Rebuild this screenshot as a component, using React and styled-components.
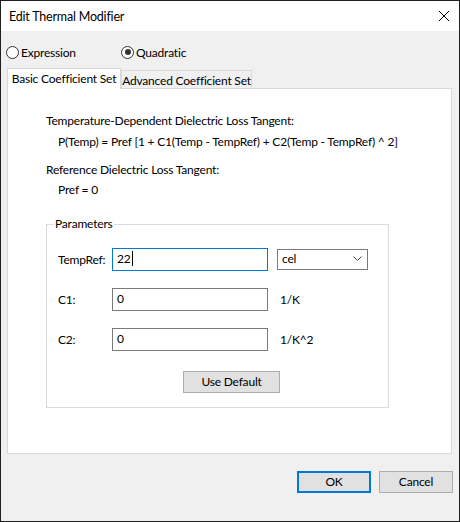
import React from "react";
import styled, { createGlobalStyle } from "styled-components";

const GlobalStyle = createGlobalStyle`
  html, body {
    margin: 0;
    padding: 0;
    background: #ffffff;
  }
  body {
    font-family: "Lato", "Liberation Sans", sans-serif;
    font-size: 12px;
    letter-spacing: -0.2px;
    color: #000;
  }
`;

const Window = styled.div`
  width: 460px;
  height: 522px;
  box-sizing: border-box;
  border: 1px solid #1f1f1f;
  display: flex;
  flex-direction: column;
  background: #f0f0f0;
`;

const TitleBar = styled.div`
  height: 30px;
  background: #fff;
  display: flex;
  align-items: center;
  justify-content: space-between;
  padding: 0 10px 0 8px;
  font-size: 12.5px;
`;

const CloseButton = styled.div`
  width: 10px;
  height: 10px;
  display: flex;
`;

const Body = styled.div`
  flex: 1;
  display: flex;
  flex-direction: column;
  padding: 13px 7px 0 6px;
`;

const RadioRow = styled.div`
  display: flex;
  height: 16px;
  align-items: center;
  margin-left: -1px;
`;

const Radio = styled.label`
  display: flex;
  align-items: center;
  gap: 2px;
  width: ${(p) => p.width}px;
`;

const RadioDot = styled.span`
  width: 13px;
  height: 13px;
  box-sizing: border-box;
  border: 1px solid #333;
  border-radius: 50%;
  background: #fff;
  display: flex;
  align-items: center;
  justify-content: center;
  &::after {
    content: "";
    width: 6px;
    height: 6px;
    border-radius: 50%;
    background: ${(p) => (p.checked ? "#333" : "transparent")};
  }
`;

const TabStrip = styled.div`
  display: flex;
  align-items: flex-end;
  margin-top: 8px;
  margin-bottom: -1px;
  position: relative;
  z-index: 1;
`;

const Tab = styled.div`
  box-sizing: border-box;
  width: ${(p) => p.width}px;
  height: ${(p) => (p.active ? 21 : 18)}px;
  margin-bottom: ${(p) => (p.active ? 0 : 1)}px;
  border: 1px solid #d9d9d9;
  border-bottom: none;
  background: ${(p) => (p.active ? "#fff" : "#f0f0f0")};
  display: flex;
  align-items: center;
  justify-content: center;
  white-space: nowrap;
  padding: ${(p) => (p.active ? "0 0 2px" : "2px 0 0")};
`;

const Panel = styled.div`
  height: 366px;
  box-sizing: border-box;
  border: 1px solid #d9d9d9;
  background: #fff;
  padding: 24px 0 0 38px;
`;

const Heading = styled.div`
  line-height: 16px;
  margin-top: ${(p) => p.gap || 0}px;
`;

const Indented = styled(Heading)`
  padding-left: 12px;
`;

const GroupBox = styled.fieldset`
  width: 343px;
  box-sizing: border-box;
  margin: 18px 0 0 0;
  padding: 0 0 14px 11px;
  border: 1px solid #dcdcdc;
  min-width: 0;
`;

const Legend = styled.legend`
  line-height: 16px;
  padding: 0 1px;
  margin-left: -4px;
`;

const FieldGrid = styled.div`
  display: grid;
  grid-template-columns: 44px 156px auto;
  column-gap: 10px;
  row-gap: 17px;
  align-items: center;
  margin-top: 16px;
`;

const FieldLabel = styled.span``;

const TextField = styled.div`
  box-sizing: border-box;
  height: 23px;
  border: 1px solid ${(p) => (p.focused ? "#0078d7" : "#7a7a7a")};
  background: #fff;
  padding: 0 4px;
  display: flex;
  align-items: center;
  padding-bottom: 2px;
`;

const Caret = styled.span`
  display: inline-block;
  width: 1px;
  height: 15px;
  background: #000;
  margin-left: 1px;
`;

const Combo = styled.div`
  box-sizing: border-box;
  width: 91px;
  height: 21px;
  margin-left: -1px;
  border: 1px solid #7a7a7a;
  background: #fff;
  display: flex;
  align-items: center;
  justify-content: space-between;
  padding: 0 5px 2px 4px;
`;

const Unit = styled.span`
  padding-left: 2px;
`;

const ButtonRow = styled.div`
  display: flex;
  margin-top: 20px;
  padding-left: 125px;
`;

const Button = styled.div`
  box-sizing: border-box;
  width: ${(p) => p.width || 74}px;
  height: 22px;
  background: #e1e1e1;
  border: ${(p) => (p.primary ? "2px solid #0078d7" : "1px solid #adadad")};
  display: flex;
  align-items: center;
  justify-content: center;
  padding-bottom: 1px;
`;

const Footer = styled.div`
  display: flex;
  justify-content: flex-end;
  gap: 8px;
  margin-top: 17px;
  margin-right: -1px;
`;

const Chevron = () => (
  <svg width="9" height="5" viewBox="0 0 9 5">
    <path d="M0.5 0.5 L4.5 4.5 L8.5 0.5" fill="none" stroke="#444" strokeWidth="1" />
  </svg>
);

const CloseIcon = () => (
  <svg width="10" height="10" viewBox="0 0 10 10">
    <path d="M0 0 L10 10 M10 0 L0 10" stroke="#000" strokeWidth="1" />
  </svg>
);

const fields = [
  { label: "C1:", value: "0", unit: "1/K" },
  { label: "C2:", value: "0", unit: "1/K^2" },
];

export default function App() {
  return (
    <>
      <GlobalStyle />
      <Window>
        <TitleBar>
          <span>Edit Thermal Modifier</span>
          <CloseButton>
            <CloseIcon />
          </CloseButton>
        </TitleBar>
        <Body>
          <RadioRow>
            <Radio width={115}>
              <RadioDot />
              Expression
            </Radio>
            <Radio>
              <RadioDot checked />
              Quadratic
            </Radio>
          </RadioRow>
          <TabStrip>
            <Tab active width={114}>Basic Coefficient Set</Tab>
            <Tab width={131}>Advanced Coefficient Set</Tab>
          </TabStrip>
          <Panel>
            <Heading>Temperature-Dependent Dielectric Loss Tangent:</Heading>
            <Indented gap={5}>
              P(Temp) = Pref [1 + C1(Temp - TempRef) + C2(Temp - TempRef) ^ 2]
            </Indented>
            <Heading gap={12}>Reference Dielectric Loss Tangent:</Heading>
            <Indented gap={4}>Pref = 0</Indented>
            <GroupBox>
              <Legend>Parameters</Legend>
              <FieldGrid>
                <FieldLabel>TempRef:</FieldLabel>
                <TextField focused>
                  22
                  <Caret />
                </TextField>
                <Combo>
                  <span>cel</span>
                  <Chevron />
                </Combo>
                {fields.map((f) => (
                  <React.Fragment key={f.label}>
                    <FieldLabel>{f.label}</FieldLabel>
                    <TextField>{f.value}</TextField>
                    <Unit>{f.unit}</Unit>
                  </React.Fragment>
                ))}
              </FieldGrid>
              <ButtonRow>
                <Button width={97}>Use Default</Button>
              </ButtonRow>
            </GroupBox>
          </Panel>
          <Footer>
            <Button primary>OK</Button>
            <Button>Cancel</Button>
          </Footer>
        </Body>
      </Window>
    </>
  );
}
